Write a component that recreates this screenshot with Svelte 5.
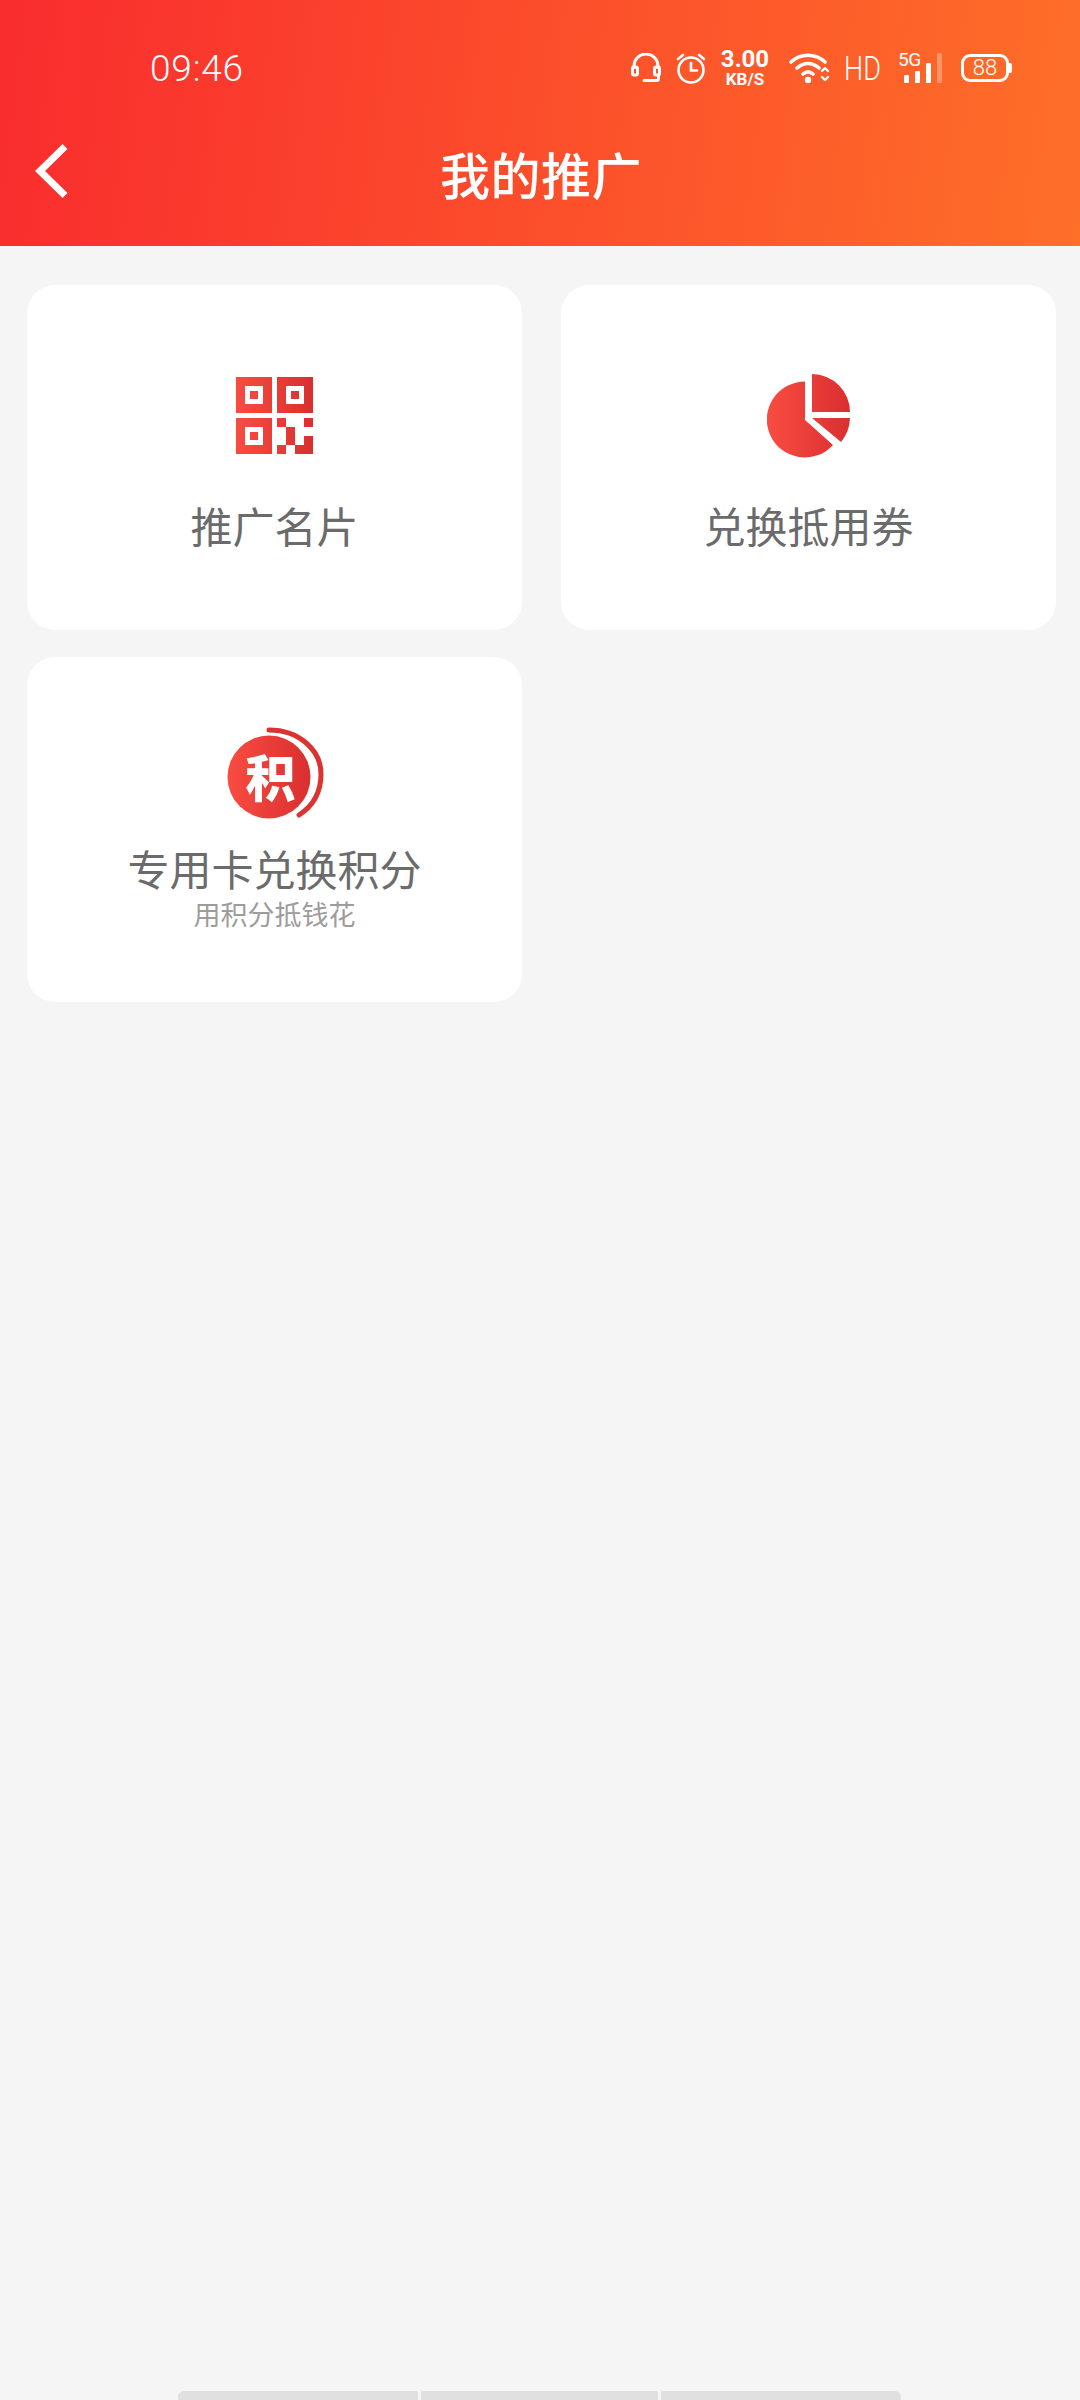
<script>
  const cards = [
    { icon: 'qr', title: '推广名片' },
    { icon: 'pie', title: '兑换抵用券' },
    { icon: 'points', title: '专用卡兑换积分', sub: '用积分抵钱花' }
  ];
</script>

<div class="page">
  <header class="top">
    <div class="status">
      <span class="time">09:46</span>
      <div class="status-icons">
        <svg width="30" height="30" viewBox="0 0 30 30" fill="none" stroke="#fff" stroke-width="3">
          <path d="M3 16V13a12 12 0 0 1 24 0v3" />
          <rect x="1.500" y="14" width="5" height="8" rx="1.500" />
          <rect x="23.500" y="14" width="5" height="8" rx="1.500" />
          <path d="M27.500 22v3.500a2 2 0 0 1-2 2H13" stroke-linecap="round" />
        </svg>
        <svg class="ic-alarm" width="30" height="31" viewBox="0 0 30 31" fill="none" stroke="#fff" stroke-width="2.600">
          <circle cx="15" cy="17" r="12.500" />
          <path d="M15 10v7.500h6M2 6l5-4M28 6l-5-4" stroke-linecap="round" />
        </svg>
        <div class="speed">
          <span class="speed-num">3.00</span>
          <span class="speed-unit">KB/S</span>
        </div>
        <svg class="ic-wifi" width="42" height="32" viewBox="0 0 42 32" fill="none" stroke="#fff" stroke-width="3.600">
          <path d="M2 10c10-9 24-9 34 0M8 16c7-6 15-6 22 0M14 22c3.500-3 6.500-3 10 0" stroke-linecap="round" />
          <circle cx="19" cy="28" r="3.200" fill="#fff" stroke="none" />
          <path d="M33 19l3-3 3 3M33 25l3 3 3-3" stroke-width="2.400" stroke-linecap="round" stroke-linejoin="round" />
        </svg>
        <span class="hd">HD</span>
        <div class="signal">
          <span class="five-g">5G</span>
          <svg width="38" height="30" viewBox="0 0 38 30" fill="#fff">
            <rect x="0" y="22" width="5" height="8" rx="1" />
            <rect x="11" y="18" width="5" height="12" rx="1" />
            <rect x="22" y="10" width="5" height="20" rx="1" />
            <rect x="33" y="0" width="5" height="30" rx="1" opacity="0.3" />
          </svg>
        </div>
        <div class="battery">
          <span class="battery-body">88</span>
          <span class="battery-cap"></span>
        </div>
      </div>
    </div>
    <div class="nav">
      <svg class="back" width="34" height="54" viewBox="0 0 34 54" fill="none" stroke="#fff" stroke-width="7">
        <path d="M31 2.500L6 27l25 24.500" />
      </svg>
      <h1>我的推广</h1>
    </div>
  </header>

  <main class="grid">
    {#each cards as card}
      <div class="card" class:tight={card.sub}>
        {#if card.icon === 'qr'}
          <svg class="icon" width="78" height="78" viewBox="0 0 78 78">
            <defs>
              <linearGradient id="qrFill" x1="0" y1="0" x2="1" y2="0">
                <stop offset="0" stop-color="#f94c41" />
                <stop offset="1" stop-color="#d92f2f" />
              </linearGradient>
            </defs>
            <path fill="url(#qrFill)" fill-rule="evenodd" d="M0 0h36v36H0zM9 9v18h18V9zM14 14h8v8h-8zM41 0h36v36H41zM50 9v18h18V9zM55 14h8v8h-8zM0 41h36v36H0zM9 50v18h18V50zM14 55h8v8h-8zM41 41h9v9h-9zM68 41h9v9h-9zM50 50h9v18h-9zM68 59h9v18H59v-9h9zM41 68h9v9h-9z" />
          </svg>
        {:else if card.icon === 'pie'}
          <svg class="icon pie" width="84" height="84" viewBox="0 0 84 84">
            <defs>
              <linearGradient id="pieFill" gradientUnits="userSpaceOnUse" x1="0" y1="0" x2="84" y2="0">
                <stop offset="0" stop-color="#f94c41" />
                <stop offset="1" stop-color="#d92f2f" />
              </linearGradient>
            </defs>
            <g fill="url(#pieFill)">
              <path d="M38 7.500A38 38 0 1 0 66 71L38 46z" />
              <path d="M45 0A38 38 0 0 1 83 38H45z" />
              <path d="M45 44H83A40 40 0 0 1 74 68z" />
            </g>
          </svg>
        {:else}
          <div class="points">
            <svg width="98" height="94" viewBox="0 0 98 94">
              <defs>
                <linearGradient id="pointsFill" x1="0" y1="0" x2="1" y2="0">
                  <stop offset="0" stop-color="#f94c41" />
                  <stop offset="1" stop-color="#d92f2f" />
                </linearGradient>
              </defs>
              <circle cx="42" cy="51" r="41.500" fill="url(#pointsFill)" />
              <path d="M42 4C72 4 94 24 94 48C94 66 86 80 72 89" fill="none" stroke="#dc3231" stroke-width="5" stroke-linecap="round" />
            </svg>
            <span class="points-char">积</span>
          </div>
        {/if}
        <div class="title">{card.title}</div>
        {#if card.sub}
          <div class="sub">{card.sub}</div>
        {/if}
      </div>
    {/each}
  </main>

  <div class="dock">
    <span></span><span></span><span></span>
  </div>
</div>

<style>
  :global(body) {
    background: #f5f5f5;
  }

  .page {
    position: relative;
    height: 2400px;
    overflow: hidden;
    background: #f5f5f5;
    font-family: "Noto Sans CJK SC", "Noto Sans", sans-serif;
  }

  .top {
    height: 246px;
    background: linear-gradient(97deg, #f92c2e, #fe6f28);
    color: #fff;
  }

  .status {
    display: flex;
    align-items: center;
    justify-content: space-between;
    box-sizing: border-box;
    height: 136px;
    padding: 0 68px 0 150px;
  }

  .time {
    font-family: Roboto, sans-serif;
    font-size: 37px;
    font-weight: 300;
    letter-spacing: 0.8px;
  }

  .status-icons {
    display: flex;
    align-items: center;
  }

  .ic-alarm {
    margin-left: 15px;
  }

  .speed {
    display: flex;
    flex-direction: column;
    align-items: center;
    width: 50px;
    margin-left: 14px;
    font-family: Roboto, sans-serif;
    font-weight: 700;
  }

  .speed-num {
    font-size: 24px;
    line-height: 23px;
  }

  .speed-unit {
    font-size: 17px;
    line-height: 17px;
  }

  .ic-wifi {
    margin-left: 19px;
  }

  .hd {
    display: inline-block;
    width: 36px;
    margin-left: 13px;
    font-family: Roboto, sans-serif;
    font-size: 33px;
    font-weight: 300;
    line-height: 1;
    white-space: nowrap;
    transform: scaleX(0.82);
    transform-origin: left center;
  }

  .signal {
    position: relative;
    width: 44px;
    height: 30px;
    margin-left: 18px;
  }

  .signal svg {
    position: absolute;
    left: 6px;
    top: 0;
  }

  .five-g {
    position: absolute;
    left: 0;
    top: -3px;
    font-family: Roboto, sans-serif;
    font-size: 19px;
    line-height: 1;
    letter-spacing: -0.5px;
  }

  .battery {
    display: flex;
    align-items: center;
    margin-left: 19px;
  }

  .battery-body {
    box-sizing: border-box;
    width: 48px;
    height: 28px;
    border: 3px solid #fff;
    border-radius: 9px;
    font-family: Roboto, sans-serif;
    font-size: 22px;
    font-weight: 300;
    line-height: 22px;
    text-align: center;
  }

  .battery-cap {
    width: 3px;
    height: 10px;
    background: #fff;
    border-radius: 0 2px 2px 0;
  }

  .nav {
    display: flex;
    align-items: center;
    justify-content: center;
    position: relative;
    height: 80px;
  }

  .back {
    position: absolute;
    left: 34px;
    top: 8px;
  }

  h1 {
    margin: 0 0 6px 2px;
    font-size: 50px;
    font-weight: 500;
    line-height: 74px;
    letter-spacing: 0.5px;
  }

  .grid {
    display: grid;
    grid-template-columns: 495px 495px;
    grid-auto-rows: 345px;
    gap: 27px 39px;
    padding: 39px 24px 0 27px;
  }

  .card {
    display: flex;
    flex-direction: column;
    align-items: center;
    box-sizing: border-box;
    padding-top: 92px;
    background: #fff;
    border-radius: 28px;
  }

  .card.tight {
    padding-top: 69px;
  }

  .icon {
    display: block;
  }

  .pie {
    margin-top: -3px;
    margin-bottom: -3px;
  }

  .points {
    position: relative;
    width: 96px;
    height: 94px;
  }

  .points svg {
    display: block;
  }

  .points-char {
    position: absolute;
    left: 19px;
    top: 18px;
    width: 50px;
    font-size: 50px;
    font-weight: 900;
    line-height: 62px;
    text-align: center;
    color: #fff;
  }

  .title {
    margin-top: 41px;
    font-size: 42px;
    line-height: 58px;
    color: #6b6b6b;
  }

  .tight .title {
    margin-top: 19px;
  }

  .sub {
    margin-top: -1px;
    font-size: 27px;
    line-height: 36px;
    color: #9c9c9c;
  }

  .dock {
    position: absolute;
    left: 178px;
    bottom: 0;
    display: grid;
    grid-template-columns: 240px 237px 240px;
    gap: 3px;
    height: 9px;
  }

  .dock span {
    background: #e0e0e0;
  }

  .dock span:first-child {
    border-radius: 6px 0 0 0;
  }

  .dock span:last-child {
    border-radius: 0 6px 0 0;
  }
</style>
